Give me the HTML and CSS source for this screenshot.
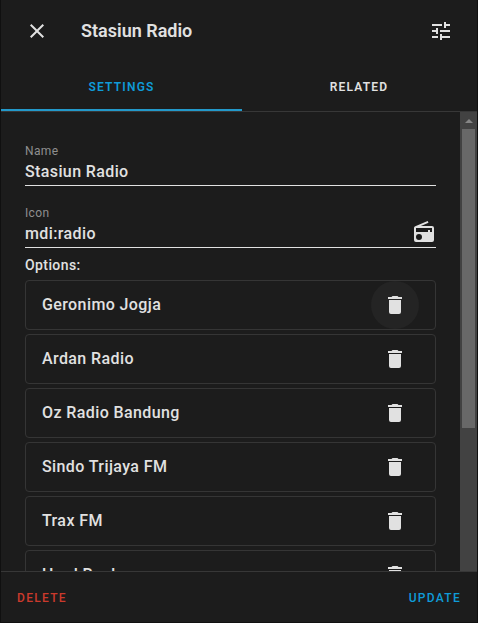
FILE: index.html
```html
<!DOCTYPE html>
<html lang="id">
<head>
<meta charset="utf-8">
<title>Stasiun Radio</title>
<link rel="stylesheet" href="styles.css">
</head>
<body>
<svg class="defs" aria-hidden="true">
  <symbol id="trash" viewBox="0 0 24 24"><path d="M19,4H15.5L14.5,3H9.5L8.5,4H5V6H19M6,19A2,2 0 0,0 8,21H16A2,2 0 0,0 18,19V7H6V19Z"/></symbol>
</svg>
<main class="dialog">
  <header class="header">
    <svg class="icon" viewBox="0 0 24 24"><path d="M19,6.41L17.59,5L12,10.59L6.41,5L5,6.41L10.59,12L5,17.59L6.41,19L12,13.41L17.59,19L19,17.59L13.41,12L19,6.41Z"/></svg>
    <h1 class="title">Stasiun Radio</h1>
    <svg class="icon" viewBox="0 0 24 24"><path d="M3,17V19H9V17H3M3,5V7H13V5H3M13,21V19H21V17H13V15H11V21H13M7,9V11H3V13H7V15H9V9H7M21,13V11H11V13H21M15,9H17V7H21V5H17V3H15V9Z"/></svg>
  </header>
  <nav class="tabs">
    <div class="tab active">SETTINGS</div>
    <div class="tab">RELATED</div>
  </nav>
  <div class="scroller">
    <section class="content">
      <div class="field">
        <div class="label">Name</div>
        <div class="value">Stasiun Radio</div>
      </div>
      <div class="field">
        <div class="label">Icon</div>
        <div class="value">mdi:radio
          <svg class="icon radio" viewBox="0 0 24 24"><path d="M20,6A2,2 0 0,1 22,8V20A2,2 0 0,1 20,22H4A2,2 0 0,1 2,20V8C2,7.15 2.53,6.42 3.28,6.13L15.71,1L16.47,2.83L8.83,6H20M20,8H4V12H16V10H18V12H20V8M7,14A3,3 0 0,0 4,17A3,3 0 0,0 7,20A3,3 0 0,0 10,17A3,3 0 0,0 7,14Z"/></svg>
        </div>
      </div>
      <div class="options-label">Options:</div>
      <div class="options">
        <div class="option"><span class="name">Geronimo Jogja</span><span class="remove focused"><svg class="icon"><use href="#trash"/></svg></span></div>
        <div class="option"><span class="name">Ardan Radio</span><span class="remove"><svg class="icon"><use href="#trash"/></svg></span></div>
        <div class="option"><span class="name">Oz Radio Bandung</span><span class="remove"><svg class="icon"><use href="#trash"/></svg></span></div>
        <div class="option"><span class="name">Sindo Trijaya FM</span><span class="remove"><svg class="icon"><use href="#trash"/></svg></span></div>
        <div class="option"><span class="name">Trax FM</span><span class="remove"><svg class="icon"><use href="#trash"/></svg></span></div>
        <div class="option"><span class="name">Hard Rock</span><span class="remove"><svg class="icon"><use href="#trash"/></svg></span></div>
      </div>
    </section>
    <div class="scrollbar">
      <div class="arrow-button"><div class="arrow"></div></div>
      <div class="thumb"></div>
    </div>
  </div>
  <footer class="footer">
    <div class="action delete">DELETE</div>
    <div class="action update">UPDATE</div>
  </footer>
</main>
</body>
</html>
```
FILE: styles.css
```css
* { box-sizing: border-box; }
body {
  margin: 0;
  background: #101010;
  color: #e1e1e1;
  font-family: Roboto, sans-serif;
  font-weight: 500;
}
.defs { display: none; }
.dialog {
  width: 476px;
  height: 622px;
  margin-left: 1px;
  background: #1c1c1c;
  display: flex;
  flex-direction: column;
}
.icon { display: block; width: 24px; height: 24px; fill: #e1e1e1; flex: none; }
.header {
  height: 62px;
  flex: none;
  display: flex;
  align-items: center;
  padding: 0 24px;
}
.title { flex: 1; margin: 0 0 0 32px; font-size: 18px; line-height: 24px; font-weight: 600; }
.tabs {
  height: 50px;
  flex: none;
  display: flex;
  border-bottom: 1px solid #373737;
}
.tab {
  width: 234px;
  padding-top: 17px;
  line-height: 16px;
  font-size: 12px;
  letter-spacing: 1.2px;
  font-weight: 600;
  text-align: center;
}
.tab.active { width: 241px; color: #0f9bd8; border-bottom: 2px solid #2399ca; }
.scroller { flex: 1; min-height: 0; display: flex; overflow: hidden; }
.content { width: 435px; margin-right: 24px; padding: 30px 0 0 24px; }
.field { height: 44px; margin-bottom: 18px; border-bottom: 1px solid #e1e1e1; }
.label { height: 18px; line-height: 18px; font-size: 12px; font-weight: 400; letter-spacing: .35px; color: #8f8f8f; }
.value { height: 24px; display: flex; justify-content: space-between; line-height: 23px; font-size: 16px; letter-spacing: .38px; }
.radio { margin-top: -2px; }
.options-label { margin-top: -12px; height: 26px; line-height: 22px; font-size: 14px; letter-spacing: .4px; }
.options { display: grid; gap: 4px; }
.option {
  height: 50px;
  border: 1px solid #353535;
  border-radius: 4px;
  padding: 0 16px;
  display: flex;
  align-items: center;
  justify-content: space-between;
  font-size: 16px;
  letter-spacing: .4px;
}
.name { padding-bottom: 2px; }
.remove { width: 48px; height: 48px; border-radius: 50%; display: grid; place-items: center; }
.focused { background: #242424; }
.scrollbar { width: 17px; background: #424242; padding: 0 2px; }
.arrow-button { height: 17px; display: grid; place-items: center; }
.arrow { border: 4px solid transparent; border-top: 0; border-bottom-color: #868686; }
.thumb { height: 299px; background: #686868; }
.footer {
  height: 51px;
  flex: none;
  border-top: 1px solid #373737;
  display: flex;
  justify-content: space-between;
  align-items: center;
  padding: 2px 16px 0 16px;
}
.action { font-size: 12px; letter-spacing: 1.3px; line-height: 16px; }
.delete { color: #cb3a2c; }
.update { color: #0f9bd8; }
```
